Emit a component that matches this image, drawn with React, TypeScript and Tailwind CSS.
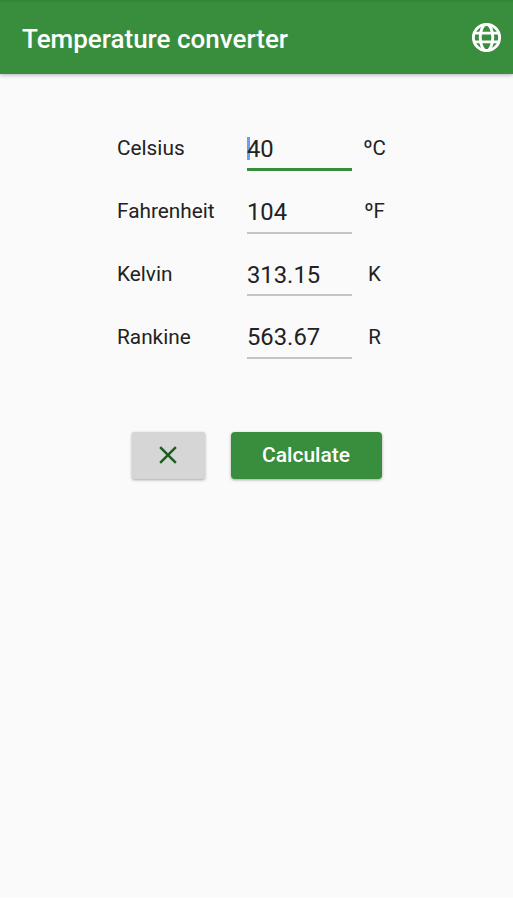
import { MdClose } from "react-icons/md";

interface Scale {
  label: string;
  value: string;
  unit: string;
  active?: boolean;
}

const scales: Scale[] = [
  { label: "Celsius", value: "40", unit: "ºC", active: true },
  { label: "Fahrenheit", value: "104", unit: "ºF" },
  { label: "Kelvin", value: "313.15", unit: "K" },
  { label: "Rankine", value: "563.67", unit: "R" },
];

function GlobeIcon() {
  return (
    <svg
      viewBox="0 0 24 24"
      className="size-[35px]"
      fill="none"
      stroke="currentColor"
      strokeWidth="2"
    >
      <circle cx="12" cy="12" r="9" />
      <ellipse cx="12" cy="12" rx="4.3" ry="9" />
      <path d="M4 9h16M4 15h16" />
    </svg>
  );
}

function AppBar() {
  return (
    <header className="flex h-[74px] items-center justify-between border-t-2 border-[#35843a] bg-[#388e3c] pr-[9px] pb-px pl-[22px] text-white shadow-[0_1px_4px_rgba(0,0,0,0.3)]">
      <h1 className="pt-[3px] text-[26px] leading-[30px] font-medium whitespace-nowrap">
        Temperature converter
      </h1>
      <GlobeIcon />
    </header>
  );
}

function ScaleRow({ label, value, unit, active }: Scale) {
  return (
    <div className="flex h-[62.8px] items-start">
      <span className="w-[130px] pt-[11.4px] text-[20.8px] leading-6">{label}</span>
      <div
        className={
          active
            ? "relative h-[46px] w-[105px] border-b-[3px] border-[#388e3c]"
            : "relative h-[45.8px] w-[105px] border-b-2 border-[#c4c4c4]"
        }
      >
        {active && (
          <span className="absolute top-[12px] left-0 h-[23px] w-[3px] bg-[#6d9ef0]" />
        )}
        <span className="relative block pt-[10px] text-[23.8px] leading-7">{value}</span>
      </div>
      <span className="w-[45px] pt-[11.4px] text-center text-[20.5px] leading-6">{unit}</span>
    </div>
  );
}

export default function App() {
  return (
    <div className="flex h-[900px] w-[513px] flex-col border-b-2 border-white bg-[#fafafa] font-['Roboto',sans-serif] text-[#222]">
      <AppBar />
      <main className="pt-[51px]">
        <div className="h-[252px] pl-[117px]">
          {scales.map((scale) => (
            <ScaleRow key={scale.label} {...scale} />
          ))}
        </div>
        <div className="mt-[55px] flex gap-[26px] pl-[132px]">
          <button className="flex h-[47px] w-[73px] items-center justify-center rounded-[2px] bg-[#d6d6d6] pr-px pb-px text-[#1b5e20] shadow-[0_1px_3px_rgba(0,0,0,0.35)]">
            <MdClose size={30} />
          </button>
          <button className="h-[47px] w-[151px] rounded-[4px] bg-[#388e3c] pr-px text-[21px] font-medium text-white shadow-[0_1px_3px_rgba(0,0,0,0.35)]">
            Calculate
          </button>
        </div>
      </main>
    </div>
  );
}
